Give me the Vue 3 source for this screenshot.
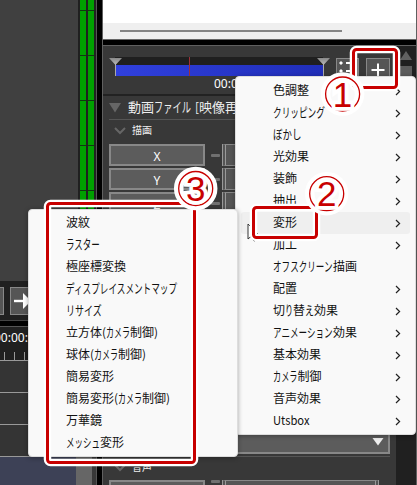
<script setup>
import { h } from 'vue'

// Each label is a list of runs: [text, rendered width]
const mainMenu = [
  { runs: [['色調整', 36]], sub: true },
  { runs: [['クリッピング', 52]], sub: true },
  { runs: [['ぼかし', 28.5]], sub: true },
  { runs: [['光効果', 36]], sub: true },
  { runs: [['装飾', 24]], sub: true },
  { runs: [['抽出', 24]], sub: true },
  { runs: [['変形', 24]], sub: true, active: true },
  { runs: [['加工', 24]], sub: true },
  { runs: [['オフスクリーン', 60], ['描画', 24]] },
  { runs: [['配置', 24]], sub: true },
  { runs: [['切', 12], ['り', 8], ['替', 12], ['え', 9], ['効果', 24]], sub: true },
  { runs: [['アニメーション', 60], ['効果', 24]], sub: true },
  { runs: [['基本効果', 48]], sub: true },
  { runs: [['カメラ', 24.5], ['制御', 24]], sub: true },
  { runs: [['音声効果', 48]], sub: true },
  { runs: [['Utsbox', 36.5]], sub: true },
]
const camera = [['(', 4], ['カメラ', 24], ['制御', 24], [')', 4]]
const subMenu = [
  [['波紋', 24]],
  [['ラスター', 34]],
  [['極座標変換', 60]],
  [['ディスプレイスメントマップ', 112]],
  [['リサイズ', 36]],
  [['立方体', 36], ...camera],
  [['球体', 24], ...camera],
  [['簡易変形', 48]],
  [['簡易変形', 48], ...camera],
  [['万華鏡', 36]],
  [['メッシュ', 34], ['変形', 24]],
]
const title = [['動画', 26], ['ファイル', 37], [' ', 4], ['[', 4], ['映像再', 39]]

// Kana are set condensed: full height, squeezed horizontally to the run's width
const kana = /^[\u3040-\u30ff]+$/
function Label({ runs, size = 12, color = '#111' }) {
  let x = 0
  const parts = runs.map(([t, w]) => {
    const isKana = kana.test(t)
    const em = isKana ? size + 1 : size
    const sx = isKana ? w / (t.length * em) : 1
    const node = isKana
      ? h('text', { transform: `translate(${x} ${size + 1}) scale(${sx} 1)`, 'font-size': em }, t)
      : h('text', { x, y: size + 1, textLength: w, lengthAdjust: 'spacingAndGlyphs' }, t)
    x += w
    return node
  })
  return h('svg', {
    width: x + 2, height: size + 6, fill: color, 'font-size': size,
    'font-family': '"Noto Sans CJK JP", "Noto Sans", sans-serif',
  }, parts)
}
Label.props = ['runs', 'size', 'color']

const rings = [
  { n: 1, x: 342.6, y: 94 },
  { n: 2, x: 326.7, y: 193.7 },
  { n: 3, x: 195.7, y: 188.5 },
]
</script>

<template>
  <div class="screen">
    <div class="left">
      <div class="preview">
        <div class="canvas"></div>
        <div class="meters"><i></i><i></i></div>
      </div>
      <div class="tools">
        <div class="tool cut"></div>
        <div class="tool">
          <svg width="26" height="26"><path d="M3 13H16" stroke="#fff" stroke-width="2.4" /><path d="M12 5L20 13L12 21Z" fill="#fff" /></svg>
        </div>
      </div>
      <div class="bar"></div>
      <div class="ruler">
        <span>00:00:00</span>
        <svg width="97" height="8"><path d="M4.5 0V8M14.5 0V8M24.5 0V8M34.5 0V8" stroke="#999" /></svg>
      </div>
      <div class="track"></div>
      <div class="track"></div>
      <div class="track"></div>
      <div class="clip"><b></b><i></i></div>
    </div>
    <div class="divider"></div>
    <div class="right">
      <div class="view"><div class="page"></div><div class="hscroll"><i></i></div></div>
      <div class="gap"></div>
      <div class="panel">
        <div class="props">
          <div class="seek">
            <svg class="range" width="230" height="38">
              <defs>
                <linearGradient id="blue"><stop stop-color="#3040de" /><stop offset="1" stop-color="#202eb8" /></linearGradient>
                <linearGradient id="mark" x2="0" y2="1"><stop stop-color="#888" /><stop offset="1" stop-color="#bbb" /></linearGradient>
              </defs>
              <rect x="12" y="11" width="208" height="8" fill="#1f1f1f" />
              <rect x="12" y="19" width="208" height="11" fill="url(#blue)" />
              <path d="M86.5 11V30" stroke="#a03038" />
              <path d="M12.5 18V30M220.5 18V30" stroke="#aaa" />
              <path d="M6 12H19L12.5 19ZM214 12H227L220.5 19Z" fill="url(#mark)" />
            </svg>
            <div class="btn list">
              <svg width="22" height="20"><path d="M3 3H5V5H3ZM3 11H5V13H3Z" fill="#fff" stroke="#fff" /><path d="M9 4H20M9 12H20" stroke="#fff" stroke-width="2" /></svg>
            </div>
            <div class="btn plus">
              <svg width="22" height="22"><path d="M4.500 11H17.5M11 4.500V17.5" stroke="#fff" stroke-width="2" /></svg>
            </div>
          </div>
          <div class="time">00:00</div>
          <div class="head">
            <svg width="12" height="10"><path d="M0 0H12L6 9.500Z" fill="#666" /></svg>
            <Label :runs="title" :size="13" color="#eee" />
          </div>
          <div class="sub">
            <svg width="12" height="8"><path d="M1 1L6 6L11 1" fill="none" stroke="#666" stroke-width="2" /></svg>
            <Label :runs="[['描画', 20]]" :size="10" color="#eee" />
          </div>
          <div v-for="n in ['X', 'Y', 'Z']" :key="n" class="row">
            <div class="name">{{ n }}</div><i class="dash"></i><div class="slider"></div>
          </div>
          <div class="fill"></div>
          <div class="select"><svg width="12" height="8"><path d="M0.500 0H11.500L6 7.500Z" fill="#eee" /></svg></div>
          <div class="sub audio">
            <svg width="12" height="8"><path d="M1 1L6 6L11 1" fill="none" stroke="#666" stroke-width="2" /></svg>
            <Label :runs="[['音声', 20]]" :size="10" color="#eee" />
          </div>
          <div class="row"><div class="name"></div><i class="dash"></i><div class="slider wide"></div></div>
        </div>
        <div class="vscroll">
          <svg width="12" height="10"><path d="M6 0L12 9H0Z" fill="#606060" /></svg>
          <i></i>
        </div>
      </div>
    </div>

    <div class="menu main">
      <div v-for="(m, i) in mainMenu" :key="i" class="item" :class="{ active: m.active }">
        <Label :runs="m.runs" />
        <svg v-if="m.sub" class="arrow" width="6" height="9"><path d="M1 1L4.600 4.500L1 8" fill="none" stroke="#222" stroke-width="1.200" /></svg>
      </div>
    </div>
    <svg class="cursor" width="13" height="20"><path d="M1 1V16L4.500 13L7 18L9.500 17L7.500 12H12Z" fill="#fff" stroke="#333" /></svg>
    <div class="menu second">
      <div v-for="(m, i) in subMenu" :key="i" class="item"><Label :runs="m" /></div>
    </div>

    <svg class="marks" width="417" height="485">
      <g fill="none" stroke="#fff" stroke-width="7.500">
        <rect x="353.500" y="49.500" width="43" height="38" rx="3" />
        <rect x="253.500" y="207.500" width="63" height="30" rx="3" />
        <rect x="47.500" y="203.500" width="147" height="259" rx="3" />
      </g>
      <g fill="none" stroke="#c80000" stroke-width="3">
        <rect x="353.500" y="49.500" width="43" height="38" rx="3" />
        <rect x="253.500" y="207.500" width="63" height="30" rx="3" />
        <rect x="47.500" y="203.500" width="147" height="259" rx="3" />
      </g>
      <g v-for="r in rings" :key="r.n">
        <circle :cx="r.x" :cy="r.y" r="17" fill="none" stroke="#fff" stroke-width="9.500" />
        <circle :cx="r.x" :cy="r.y" r="17" fill="none" stroke="#c80000" stroke-width="1.300" />
        <text class="digit" :x="r.x" :y="r.y + 12.500">{{ r.n }}</text>
      </g>
    </svg>
  </div>
</template>

<style>
body { margin: 0; overflow: hidden; }
</style>
<style scoped>
.screen { position: relative; width: 417px; height: 485px; overflow: hidden; display: flex; background: #000; font-family: "Noto Sans", sans-serif; color: #fff; }
.screen * { box-sizing: border-box; }
.screen svg { display: block; flex: none; }
.left { width: 97px; flex: none; display: flex; flex-direction: column; overflow: hidden; border-right: 1px solid #555; }
.preview { height: 281px; display: flex; }
.canvas { width: 78px; background: #404040; }
.meters { flex: 1; display: flex; gap: 2px; padding-left: 2px; background: #202020; }
.meters i { width: 6px; background: repeating-linear-gradient(#00a000 0 10px, #103810 10px 11px, #00a000 11px 45px); }
.tools { height: 40px; background: #202020; display: flex; gap: 6px; padding: 6px 0; border-bottom: 1px solid #444; }
.tool { width: 28px; height: 28px; flex: none; background: #555; border: 1px solid #888; }
.tool.cut { width: 4px; border-left: 0; }
.bar { height: 6px; background: #000; border-bottom: 1px solid #555; }
.ruler { height: 34px; background: #202020; border-bottom: 1px solid #999; display: flex; flex-direction: column; justify-content: space-between; }
.ruler span { font-size: 12px; line-height: 22px; margin-left: -6px; }
.track { height: 32px; background: #343434; border-bottom: 1px solid #999; }
.clip { flex: 1; background: #3d4156; display: flex; justify-content: flex-end; }
.clip b { width: 16px; background: #666; }
.clip i { width: 4px; background: #383838; }
.divider { width: 5px; background: #000; }
.right { flex: 1; display: flex; flex-direction: column; border: solid #606060; border-width: 0 1px; background: #000; }
.view { height: 40px; background: #fff; border-bottom: 1px solid #666; }
.page { height: 23px; }
.hscroll { height: 16px; background: #efefef; padding: 7px 0 0 17px; }
.hscroll i { display: block; width: 222px; height: 2px; background: #858585; }
.gap { height: 5px; }
.panel { flex: 1; display: flex; border-top: 1px solid #606060; background: #383838; overflow: hidden; }
.props { width: 293px; flex: none; display: flex; flex-direction: column; }
.seek { height: 32px; display: flex; gap: 3px; }
.btn { margin-top: 12px; width: 23px; height: 20px; background: #555; border: 1px solid #888; flex: none; }
.btn.plus { margin-left: 4px; width: 24px; height: 24px; }
.time { height: 18px; font-size: 12px; line-height: 12px; padding-left: 111px; border-bottom: 2px solid #222; }
.head { height: 24px; margin-left: 6px; padding: 0; display: flex; align-items: center; gap: 7px; border-bottom: 1px solid #555; }
.sub { height: 24px; display: flex; align-items: center; gap: 6px; padding: 0 0 2px 11px; flex: none; }
.row { height: 22px; margin-bottom: 2px; padding-left: 6px; display: flex; align-items: center; flex: none; }
.name { width: 96px; height: 22px; background: #5c5c5c; border: 2px solid #888; font-size: 12px; line-height: 21px; text-align: center; }
.dash { width: 9px; height: 3px; margin: 0 2px 0 6px; background: #707070; border-radius: 1px; }
.slider { width: 100px; height: 22px; background: #555; border: 1px solid #888; border-left: 4px double #999; }
.slider.wide { width: 157px; border-right: 4px double #999; }
.fill { flex: 1; min-height: 0; }
.select { height: 24px; margin-left: 6px; width: 281px; flex: none; background: #5c5c5c; border: 2px solid #888; display: flex; align-items: center; justify-content: flex-end; padding-right: 4px; }
.audio { height: 24px; margin: 2px 6px 0; padding: 0 0 2px 5px; border-top: 1px solid #555; }
.audio + .row { height: 5px; margin-bottom: 0; align-items: flex-start; }
.vscroll { flex: 1; background: #202020; padding: 5px 0 0 4px; display: flex; flex-direction: column; gap: 5px; }
.vscroll i { width: 12px; height: 300px; background: #5c5c5c; }
.menu { position: absolute; background: #f9f9f9; border: 1px solid #ddd; border-radius: 4px; padding: 3px 5px; box-shadow: 0 1px 5px #0005; }
.main { left: 235px; top: 76px; width: 181px; height: 359px; }
.second { left: 28px; top: 209px; width: 210px; height: 248px; }
.item { height: 22px; display: flex; align-items: center; justify-content: space-between; padding: 0 9px 0 32px; border-radius: 3px; }
.second { padding-top: 2px; }
.active { background: #efefef; }
.cursor { position: absolute; left: 247px; top: 223px; }
.marks { position: absolute; left: 0; top: 0; }
.digit { font-family: "Liberation Sans", Arial, sans-serif; font-size: 35px; text-anchor: middle; fill: #c80000; stroke: #fff; stroke-width: 7.500px; paint-order: stroke; }
</style>
